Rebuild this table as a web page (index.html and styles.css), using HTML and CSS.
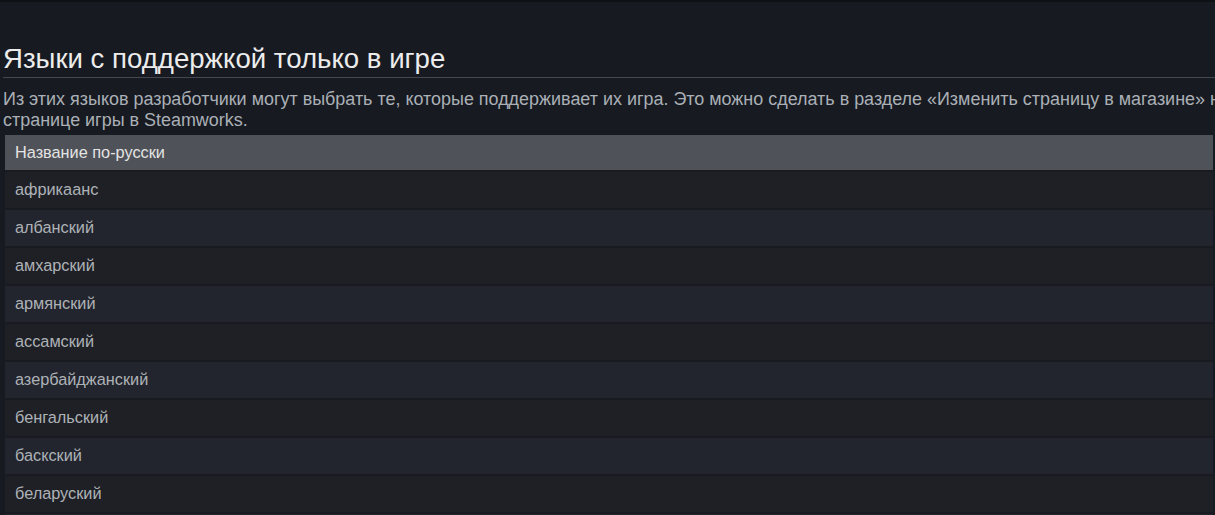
FILE: index.html
```html
<!DOCTYPE html>
<html lang="ru">
<head>
<meta charset="utf-8">
<title>Языки с поддержкой только в игре</title>
<link rel="stylesheet" href="styles.css">
</head>
<body>
<div class="page">
  <h2 class="title">Языки с поддержкой только в игре</h2>
  <p class="desc">Из этих языков разработчики могут выбрать те, которые поддерживает их игра. Это можно сделать в разделе «Изменить страницу в магазине» на странице игры в Steamworks.</p>
  <div class="table">
    <div class="thead">Название по-русски</div>
    <div class="row">африкаанс</div>
    <div class="row">албанский</div>
    <div class="row">амхарский</div>
    <div class="row">армянский</div>
    <div class="row">ассамский</div>
    <div class="row">азербайджанский</div>
    <div class="row">бенгальский</div>
    <div class="row">баскский</div>
    <div class="row">беларуский</div>
    <div class="row">болгарский</div>
  </div>
</div>
</body>
</html>
```
FILE: styles.css
```css
html, body {
  margin: 0;
  padding: 0;
  background: #171a21;
  overflow: hidden;
  height: 515px;
}
body {
  font-family: "Liberation Sans", Arial, sans-serif;
  border-top: 2px solid #0f1115;
}
.page {
  width: 1290px;
  padding: 41px 0 0 3px;
}
.title {
  margin: 0;
  font-weight: normal;
  font-size: 27.6px;
  line-height: 32px;
  color: #ececec;
  border-bottom: 1px solid #44474e;
  padding-bottom: 2px;
}
.desc {
  margin: 11px 0 0 0;
  font-size: 17.95px;
  line-height: 21px;
  color: #aab0b6;
  width: 1250px;
}
.table {
  margin: 4px 0 0 2px;
  width: 1208px;
}
.thead {
  height: 35px;
  line-height: 35px;
  padding-left: 10px;
  background: #4f5258;
  color: #e4e4e4;
  font-size: 16.3px;
}
.row {
  height: 36px;
  line-height: 35px;
  padding-left: 10px;
  font-size: 16.3px;
  color: #aeb2b7;
  background: #1e2026;
  border-top: 2px solid #191b21;
}
.row:nth-child(odd) {
  background: #22252d;
}
```
